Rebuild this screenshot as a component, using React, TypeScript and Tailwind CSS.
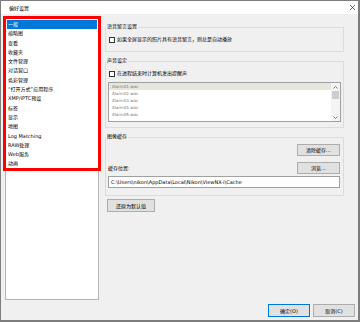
import type { ReactNode } from "react";

const sections = [
    "一般",
    "缩略图",
    "查看",
    "收藏夹",
    "文件管理",
    "对话窗口",
    "色彩管理",
    "“打开方式”应用程序",
    "XMP/IPTC预设",
    "标签",
    "显示",
    "地图",
    "Log Matching",
    "RAW处理",
    "Web服务",
    "动画",
];

const alarms = ["Alarm01.wav", "Alarm02.wav", "Alarm03.wav", "Alarm04.wav", "Alarm05.wav"];

function Checkbox() {
    return <span className="w-[6px] h-[6px] shrink-0 border border-[#333333] bg-white" />;
}

function Button({ label, className }: { label: string; className: string }) {
    return (
        <div
            className={`flex items-center justify-center border bg-[#e1e1e1] text-[5px] leading-[8px] ${className}`}
        >
            {label}
        </div>
    );
}

function Group({ title, className, children }: { title: string; className: string; children?: ReactNode }) {
    return (
        <div className={`flex flex-col border border-[#dcdcdc] ${className}`}>
            <span className="-mt-[6px] self-start bg-[#f0f0f0] px-[1px] text-[5px] leading-[8px]">{title}</span>
            {children}
        </div>
    );
}

function App() {
    return (
        <div className="w-[360px] h-[322px] bg-white font-['DejaVu_Sans','Noto_Sans_CJK_SC',sans-serif] text-black">
            <div className="relative flex h-[322px] w-[360px] flex-col border-t border-l border-r-2 border-b-2 border-[#7d7d7d] bg-[#f0f0f0]">
                <div className="flex h-[13px] items-center justify-between bg-white pl-[8px] pr-[3px]">
                    <span className="text-[5px] leading-[8px]">偏好设置</span>
                    <svg width="5" height="5" viewBox="0 0 5 5" className="block">
                        <path d="M0 0L5 5M5 0L0 5" stroke="#333" strokeWidth="0.7" />
                    </svg>
                </div>

                <div className="flex items-start pt-[3px]">
                    <div className="ml-[4px] h-[283px] w-[94px] border border-[#b4b4b4] bg-white px-[1px] pt-[2px]">
                        {sections.map((name, i) => (
                            <div
                                key={name}
                                className={
                                    i === 0
                                        ? "h-[9.3px] bg-[#0078d7] pl-[1px] text-[5px] leading-[9.3px] text-white whitespace-nowrap"
                                        : "h-[9.3px] pl-[1px] text-[5px] leading-[9.3px] whitespace-nowrap"
                                }
                            >
                                {name}
                            </div>
                        ))}
                    </div>

                    <div className="ml-[6px] mt-[10px] flex w-[239px] flex-col">
                        <Group title="语音留言设置" className="h-[25px]">
                            <div className="ml-[3px] mt-[6px] flex items-center gap-[2px]">
                                <Checkbox />
                                <span className="text-[5px] leading-[7px]">如果全屏显示的照片具有语音留言，则总是自动播放</span>
                            </div>
                        </Group>

                        <Group title="声音设定" className="mt-[9px] h-[67px]">
                            <div className="ml-[3px] mt-[6px] flex items-center gap-[2px]">
                                <Checkbox />
                                <span className="text-[5px] leading-[7px]">在进程结束时计算机发出提醒声</span>
                            </div>
                            <div className="ml-[2px] mr-[2px] mt-[5px] flex h-[40px] border border-[#a0a0a0] bg-white">
                                <div className="flex flex-1 flex-col">
                                    {alarms.map((a, i) => (
                                        <div
                                            key={a}
                                            className={
                                                i === 0
                                                    ? "h-[7px] bg-[#e6e6dd] pl-[3px] text-[4px] leading-[7px] text-[#777777]"
                                                    : "h-[7px] pl-[3px] text-[4px] leading-[7px] text-[#777777]"
                                            }
                                        >
                                            {a}
                                        </div>
                                    ))}
                                </div>
                                <div className="flex w-[9px] flex-col items-center bg-[#f4f4f4]">
                                    <div className="flex h-[8px] items-center">
                                        <svg width="5" height="3" viewBox="0 0 5 3">
                                            <path d="M0.5 2.5L2.5 0.5L4.5 2.5" fill="none" stroke="#606060" strokeWidth="0.8" />
                                        </svg>
                                    </div>
                                    <div className="h-[8px] w-[7px] bg-[#cdcdcd]" />
                                    <div className="flex-1" />
                                    <div className="flex h-[8px] items-center">
                                        <svg width="5" height="3" viewBox="0 0 5 3">
                                            <path d="M0.5 0.5L2.5 2.5L4.5 0.5" fill="none" stroke="#606060" strokeWidth="0.8" />
                                        </svg>
                                    </div>
                                </div>
                            </div>
                        </Group>

                        <Group title="图像缓存" className="mt-[9px] h-[59px]">
                            <Button label="清除缓存..." className="mr-[3px] mt-[4px] h-[12px] w-[43px] self-end border-[#adadad]" />
                            <div className="ml-[2px] mr-[3px] mt-[6px] flex items-center justify-between">
                                <span className="text-[5px] leading-[8px]">缓存位置:</span>
                                <Button label="浏览..." className="h-[12px] w-[43px] border-[#adadad]" />
                            </div>
                            <div className="ml-[2px] mr-[3px] mt-[2px] h-[12px] overflow-hidden whitespace-nowrap border border-[#a0a0a0] bg-white pl-[2px] text-[5px] leading-[10px]">
                                C:\Users\nikon\AppData\Local\Nikon\ViewNX-i\Cache
                            </div>
                        </Group>

                        <Button label="还原为默认值" className="ml-[2px] mt-[3px] h-[13px] w-[48px] border-[#adadad]" />
                    </div>
                </div>

                <div className="mt-[4px] flex justify-end gap-[3px] pr-[3px]">
                    <Button label="确定(O)" className="h-[13px] w-[42px] border-[#0078d7]" />
                    <Button label="取消(C)" className="h-[13px] w-[42px] border-[#adadad]" />
                </div>

                <div className="absolute left-[2px] top-[15px] h-[155px] w-[98px] border-[3px] border-[#ff0000]" />
            </div>
        </div>
    );
}

export default App;
